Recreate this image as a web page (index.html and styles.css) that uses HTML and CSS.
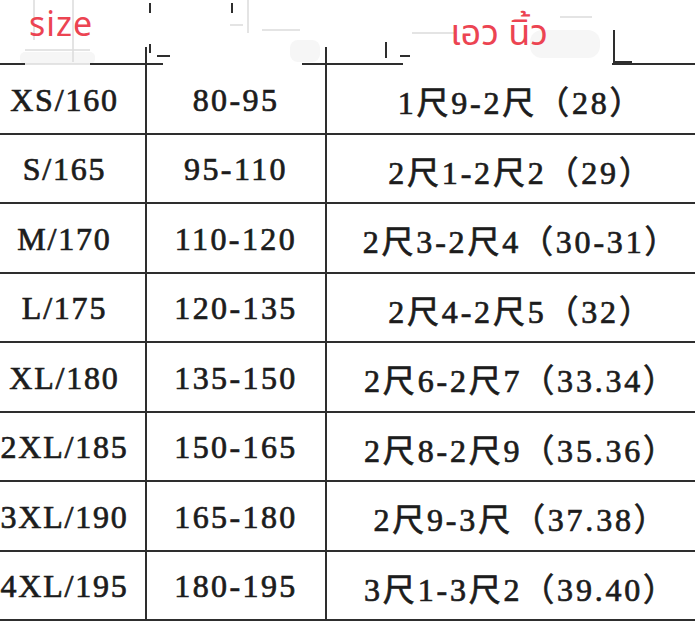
FILE: index.html
```html
<!DOCTYPE html>
<html lang="zh">
<head>
<meta charset="utf-8">
<title>Size chart</title>
<link rel="stylesheet" href="styles.css">
</head>
<body>
<div class="chart">
  <div class="head">
    <svg class="scan" width="695" height="65" viewBox="0 0 695 65" aria-hidden="true">
      <g fill="#f6f6f6">
        <rect x="20" y="52" width="75" height="12" rx="5"/>
        <rect x="290" y="40" width="30" height="22" rx="8"/>
        <rect x="530" y="30" width="70" height="28" rx="12"/>
      </g>
      <g stroke="#dcdcdc" stroke-width="1.5" fill="none">
        <path d="M34 0 V40 M73 0 V62 M25 50 H90 M25 64 H90"/>
        <path d="M248 0 V33 M230 25 H243 M412 33 H455 M560 17 H592 M262 30 H300"/>
      </g>
      <g stroke="#2e2e2e" stroke-width="2" fill="none">
        <path d="M0 64 H25 M90 64 H163 M302 64 H403 M612 64 H695"/>
        <path d="M146 47 V64 M326 47 V64 M614 30 V64 M614 62 H632"/>
        <path d="M150 3 V13 M232 3 V13 M150 44 V53 M157 56 H170 M386 42 V58 M400 56 H410"/>
      </g>
    </svg>
    <div class="label label-size">size</div>
    <div class="label label-waist">เอว นิ้ว</div>
  </div>
  <div class="row"><div class="cell c1">XS/160</div><div class="cell c2">80-95</div><div class="cell c3">1尺9-2尺（28）</div></div>
  <div class="row"><div class="cell c1">S/165</div><div class="cell c2">95-110</div><div class="cell c3">2尺1-2尺2（29）</div></div>
  <div class="row"><div class="cell c1">M/170</div><div class="cell c2">110-120</div><div class="cell c3">2尺3-2尺4（30-31）</div></div>
  <div class="row"><div class="cell c1">L/175</div><div class="cell c2">120-135</div><div class="cell c3">2尺4-2尺5（32）</div></div>
  <div class="row"><div class="cell c1">XL/180</div><div class="cell c2">135-150</div><div class="cell c3">2尺6-2尺7（33.34）</div></div>
  <div class="row"><div class="cell c1">2XL/185</div><div class="cell c2">150-165</div><div class="cell c3">2尺8-2尺9（35.36）</div></div>
  <div class="row"><div class="cell c1">3XL/190</div><div class="cell c2">165-180</div><div class="cell c3">2尺9-3尺（37.38）</div></div>
  <div class="row"><div class="cell c1">4XL/195</div><div class="cell c2">180-195</div><div class="cell c3">3尺1-3尺2（39.40）</div></div>
</div>
</body>
</html>
```
FILE: styles.css
```css
html, body {
  margin: 0;
  padding: 0;
  background: #ffffff;
}
body {
  width: 695px;
  height: 621px;
  overflow: hidden;
}
.chart {
  width: 695px;
}
.head {
  position: relative;
  height: 65px;
  display: flex;
  align-items: flex-start;
}
.scan {
  position: absolute;
  left: 0;
  top: 0;
}
.label {
  position: relative;
  color: #ec4452;
  font-family: "Noto Sans", "Noto Sans Thai", Roboto, sans-serif;
  line-height: 1;
}
.label-size {
  margin-left: 29px;
  margin-top: 6px;
  font-size: 34px;
  letter-spacing: 1px;
}
.label-waist {
  margin-left: 357px;
  margin-top: 14px;
  font-size: 36px;
}
.row {
  display: grid;
  grid-template-columns: 147px 180px 1fr;
  height: 69.5px;
  box-sizing: border-box;
  border-bottom: 2px solid #2e2e2e;
}
.cell {
  display: flex;
  align-items: center;
  justify-content: center;
  white-space: nowrap;
  font-family: "Liberation Serif", "Noto Sans CJK SC", serif;
  font-weight: normal;
  -webkit-text-stroke: 0.7px #1c1c1c;
  font-size: 32px;
  letter-spacing: 2.4px;
  color: #1c1c1c;
  padding-top: 3px;
  box-sizing: border-box;
}
.c1 {
  border-right: 2px solid #2e2e2e;
  padding-right: 16px;
  letter-spacing: 1.8px;
}
.c2 {
  border-right: 2px solid #2e2e2e;
}
.c3 {
  padding-left: 20px;
  letter-spacing: 2.8px;
}
```
